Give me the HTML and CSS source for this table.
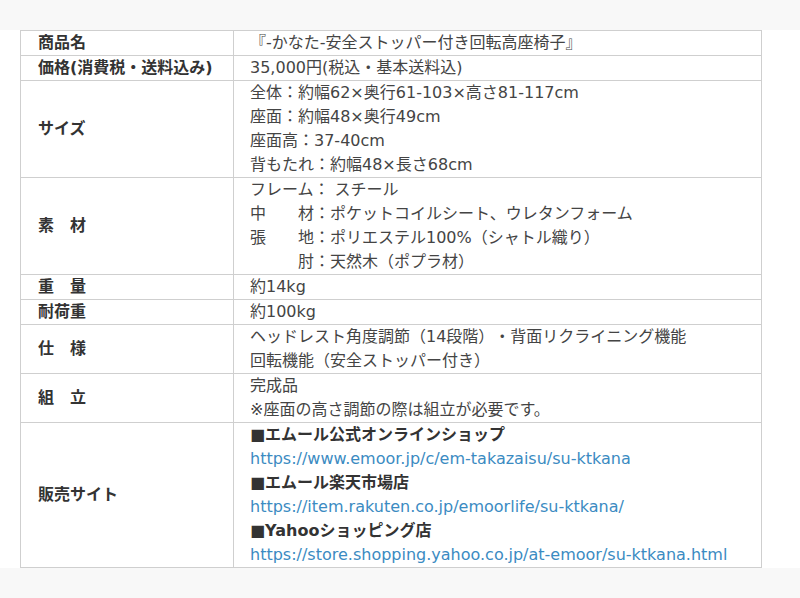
FILE: index.html
```html
<!DOCTYPE html>
<html lang="ja">
<head>
<meta charset="utf-8">
<link rel="stylesheet" href="styles.css">
</head>
<body>
<div class="page">
  <table class="spec">
    <tr><th>商品名</th><td>『-かなた-安全ストッパー付き回転高座椅子』</td></tr>
    <tr><th>価格(消費税・送料込み)</th><td>35,000円(税込・基本送料込)</td></tr>
    <tr><th>サイズ</th><td>全体：約幅62×奥行61-103×高さ81-117cm<br>座面：約幅48×奥行49cm<br>座面高：37-40cm<br>背もたれ：約幅48×長さ68cm</td></tr>
    <tr><th>素　材</th><td>フレーム： スチール<br>中　　材：ポケットコイルシート、ウレタンフォーム<br>張　　地：ポリエステル100%（シャトル織り）<br>　　　肘：天然木（ポプラ材）</td></tr>
    <tr><th>重　量</th><td>約14kg</td></tr>
    <tr><th>耐荷重</th><td>約100kg</td></tr>
    <tr><th>仕　様</th><td>ヘッドレスト角度調節（14段階）・背面リクライニング機能<br>回転機能（安全ストッパー付き）</td></tr>
    <tr><th>組　立</th><td>完成品<br>※座面の高さ調節の際は組立が必要です。</td></tr>
    <tr><th>販売サイト</th><td><b>■エムール公式オンラインショップ</b><br><a href="#">https://www.emoor.jp/c/em-takazaisu/su-ktkana</a><br><b>■エムール楽天市場店</b><br><a href="#">https://item.rakuten.co.jp/emoorlife/su-ktkana/</a><br><b>■Yahooショッピング店</b><br><a href="#">https://store.shopping.yahoo.co.jp/at-emoor/su-ktkana.html</a></td></tr>
  </table>
</div>
</body>
</html>
```

FILE: styles.css
```css
html, body {
  margin: 0;
  padding: 0;
  background: #f8f8f8;
}
body {
  padding: 30px 0;
  font-family: "DejaVu Sans", "Noto Sans CJK JP", sans-serif;
  font-size: 16px;
  line-height: 24px;
  color: #444;
  text-spacing-trim: space-all;
}
.page {
  background: #fff;
  padding: 0 20px;
  display: flex;
}
.spec {
  border-collapse: collapse;
  width: 742px;
}
.spec th, .spec td {
  border: 1px solid #cfcfcf;
  padding: 0 16px;
  vertical-align: middle;
  text-align: left;
}
.spec th {
  width: 179px;
  padding-left: 17px;
  color: #333;
  font-weight: bold;
}
.spec td b {
  color: #333;
}
.spec a {
  color: #3b8bc2;
  text-decoration: none;
}
```
